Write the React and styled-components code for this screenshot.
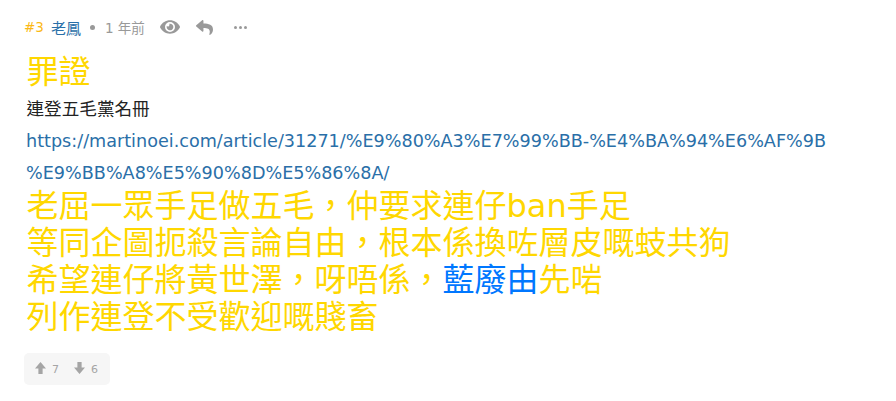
import React from "react";
import styled, { createGlobalStyle } from "styled-components";
import { FaEye, FaReply } from "react-icons/fa";

const GlobalStyle = createGlobalStyle`
  html, body {
    margin: 0;
    background: #fff;
    font-family: "DejaVu Sans", "Noto Sans CJK TC", sans-serif;
  }
`;

const Post = styled.div`
  width: 896px;
  height: 401px;
  box-sizing: border-box;
  padding: 17px 24px 0;
  overflow: hidden;
`;

const Meta = styled.div`
  display: flex;
  align-items: center;
  height: 20px;
  font-size: 15px;
  color: #999;
`;

const Floor = styled.span`
  color: #fbb917;
  font-size: 13.5px;
`;

const Author = styled.span`
  color: #2a6fa8;
  margin-left: 7px;
`;

const Dot = styled.span`
  width: 5px;
  height: 5px;
  border-radius: 50%;
  background: #999;
  margin: 0 10px 0 9px;
`;

const Time = styled.span`
  font-size: 13.5px;
`;

const IconButton = styled.span`
  display: flex;
  align-items: center;
  color: #999;
  font-size: ${(p) => p.size}px;
  margin-left: ${(p) => p.gap}px;
`;

const Dots = styled.span`
  display: flex;
  gap: 2px;
  margin-left: 21px;
  i {
    width: 3px;
    height: 3px;
    border-radius: 50%;
    background: #999;
  }
`;

const Body = styled.div`
  padding: 17px 2px 0 2.5px;
`;

const Big = styled.div`
  font-size: 32px;
  line-height: 37px;
  color: #ffd700;
  white-space: nowrap;
`;

const Title = styled(Big)`
  margin-bottom: 2px;
`;

const Blue = styled.span`
  color: #0077ff;
`;

const Line = styled.div`
  font-size: 17.6px;
  line-height: 32px;
  color: #222;
`;

const LinkLine = styled(Line)`
  color: #2a6fa8;
  margin: 0 0 -1px -0.5px;
  white-space: nowrap;
`;

const Votes = styled.div`
  display: inline-flex;
  align-items: center;
  margin-top: 17px;
  height: 32px;
  width: 86px;
  box-sizing: border-box;
  padding-left: 11px;
  border-radius: 5px;
  background: #f6f6f6;
  color: #a5a5a5;
`;

const Vote = styled.span`
  display: flex;
  align-items: center;
  gap: 6px;
  margin-right: 15px;
  font-size: 11px;
  svg {
    margin-top: -3px;
  }
`;

function ArrowIcon({ down }) {
  return (
    <svg width="11" height="12" viewBox="0 0 13 13" preserveAspectRatio="none" fill="currentColor">
      <path d={down ? "M4 0h5v6h4l-6.5 7L0 6h4z" : "M4 13h5V7h4L6.5 0 0 7h4z"} />
    </svg>
  );
}

export default function App() {
  return (
    <>
      <GlobalStyle />
      <Post>
        <Meta>
          <Floor>#3</Floor>
          <Author>老鳳</Author>
          <Dot />
          <Time>1 年前</Time>
          <IconButton size={20} gap={15}><FaEye /></IconButton>
          <IconButton size={17} gap={16}><FaReply /></IconButton>
          <Dots><i /><i /><i /></Dots>
        </Meta>
        <Body>
          <Title>罪證</Title>
          <Line>連登五毛黨名冊</Line>
          <LinkLine>
            https://martinoei.com/article/31271/%E9%80%A3%E7%99%BB-%E4%BA%94%E6%AF%9B
            <br />
            %E9%BB%A8%E5%90%8D%E5%86%8A/
          </LinkLine>
          <Big>老屈一眾手足做五毛，仲要求連仔ban手足</Big>
          <Big>等同企圖扼殺言論自由，根本係換咗層皮嘅蚑共狗</Big>
          <Big>希望連仔將黃世澤，呀唔係，<Blue>藍廢由</Blue>先啱</Big>
          <Big>列作連登不受歡迎嘅賤畜</Big>
        </Body>
        <Votes>
          <Vote><ArrowIcon />7</Vote>
          <Vote><ArrowIcon down />6</Vote>
        </Votes>
      </Post>
    </>
  );
}
